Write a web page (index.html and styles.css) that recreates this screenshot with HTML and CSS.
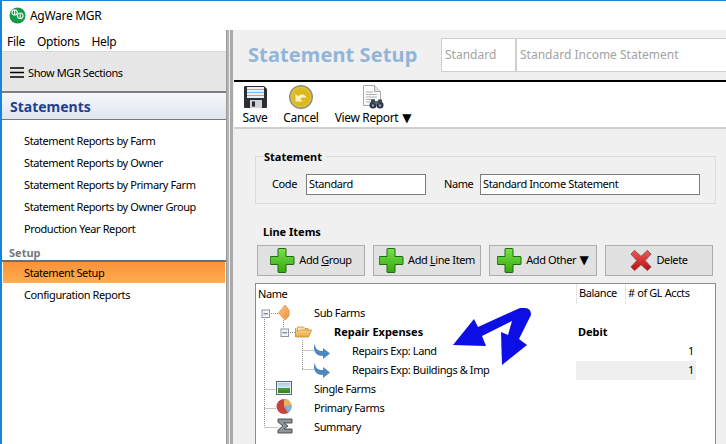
FILE: index.html
```html
<!DOCTYPE html>
<html lang="en">
<head>
<meta charset="utf-8">
<title>AgWare MGR</title>
<link rel="stylesheet" href="styles.css">
</head>
<body>
<div class="window">
  <header class="titlebar">
    <svg class="logo" width="17" height="17" viewBox="0 0 17 17"><circle cx="8.5" cy="8.5" r="8" fill="#109a45"/><g fill="none" stroke="#e8f5ec" stroke-width="1.2"><circle cx="5.6" cy="5.4" r="2.6"/><circle cx="11.2" cy="8.8" r="2.8"/><path d="M5.6 3v5M11.2 6.2v5.2"/></g></svg>
    <span class="apptitle">AgWare MGR</span>
  </header>
  <div class="workspace">
    <aside class="sidebar">
      <nav class="menu"><span>File</span><span>Options</span><span>Help</span></nav>
      <div class="sections-toggle">
        <svg width="14" height="11" viewBox="0 0 14 11"><path d="M0 1h14M0 5.5h14M0 10h14" stroke="#000" stroke-width="1.6"/></svg>
        <span>Show MGR Sections</span>
      </div>
      <h2 class="section-title">Statements</h2>
      <ul class="navlist">
        <li>Statement Reports by Farm</li>
        <li>Statement Reports by Owner</li>
        <li>Statement Reports by Primary Farm</li>
        <li>Statement Reports by Owner Group</li>
        <li>Production Year Report</li>
      </ul>
      <h3 class="navgroup">Setup</h3>
      <ul class="navlist navlist-setup">
        <li class="selected">Statement Setup</li>
        <li>Configuration Reports</li>
      </ul>
    </aside>
    <div class="splitter"></div>
    <main class="main">
      <div class="pagehead">
        <h1>Statement Setup</h1>
        <div class="headbox code">Standard</div>
        <div class="headbox name">Standard Income Statement</div>
      </div>
      <div class="toolbar">
        <div class="tool tool-save">
          <svg width="23" height="22" viewBox="0 0 23 22"><path d="M1 0h19l3 3v18a1 1 0 0 1-1 1H1a1 1 0 0 1-1-1V1a1 1 0 0 1 1-1z" fill="#2b2e33"/><rect x="3" y="1" width="17" height="11" fill="#e6f0fa"/><path d="M3 3.5h17M3 6.5h17M3 9.500h17" stroke="#7fb2e6" stroke-width="1"/><rect x="6" y="14" width="12" height="8" fill="#d0d3d6"/><rect x="8" y="15.500" width="3" height="5" fill="#26282c"/></svg>
          <span>Save</span>
        </div>
        <div class="tool tool-cancel">
          <svg width="24" height="24" viewBox="0 0 24 24"><circle cx="12" cy="12" r="11.300" fill="#e3c22c" stroke="#8a8f90" stroke-width="1.400"/><circle cx="12" cy="12" r="8.800" fill="#dcb821"/><path d="M6.500 9v7.500h7.500l-2.700-2.600c1.700-1.500 3.700-1.700 6.200-.9-.6-3.600-5.300-5-8.300-1.800z" fill="#fdf3c0"/></svg>
          <span>Cancel</span>
        </div>
        <div class="tool tool-report">
          <svg width="22" height="24" viewBox="0 0 22 24"><path d="M1.500.5h11l6 6v14h-17z" fill="#fafafa" stroke="#a8a8a8"/><path d="M12.500.5v6h6" fill="#e2e2e2" stroke="#a8a8a8"/><path d="M4 7h7M4 9.500h11M4 12h11M4 14.500h9M4 17h6" stroke="#b0b0b0"/><circle cx="11" cy="20" r="3.500" fill="#2d3640"/><circle cx="18" cy="20" r="3.500" fill="#2d3640"/><rect x="9" y="14.500" width="4" height="4" fill="#3a4450"/><rect x="16" y="14.500" width="4" height="4" fill="#3a4450"/><rect x="12.500" y="16" width="4" height="3" fill="#55616e"/><circle cx="11" cy="20.500" r="1.300" fill="#7fa0c0"/><circle cx="18" cy="20.500" r="1.300" fill="#7fa0c0"/></svg>
          <span>View Report <i class="caret">▼</i></span>
        </div>
      </div>
      <div class="content">
        <fieldset class="statement">
          <legend>Statement</legend>
          <div class="fields">
            <label class="lbl-code">Code</label><div class="input input-code">Standard</div>
            <label class="lbl-name">Name</label><div class="input input-name">Standard Income Statement</div>
          </div>
        </fieldset>
        <h4 class="lineitems">Line Items</h4>
        <div class="buttons">
          <div class="btn"><svg class="plus" width="25" height="25" viewBox="0 0 25 25"><use href="#plusicon"/></svg><span>Add <u>G</u>roup</span></div>
          <div class="btn"><svg class="plus" width="25" height="25" viewBox="0 0 25 25"><use href="#plusicon"/></svg><span>Add <u>L</u>ine Item</span></div>
          <div class="btn"><svg class="plus" width="25" height="25" viewBox="0 0 25 25"><use href="#plusicon"/></svg><span>Add Other <i class="caret">▼</i></span></div>
          <div class="btn"><svg width="22" height="23" viewBox="0 0 24 24"><defs><linearGradient id="xg" x1="0" y1="0" x2="0" y2="1"><stop offset="0" stop-color="#f05a5a"/><stop offset="1" stop-color="#b80d0d"/></linearGradient></defs><path d="M5 1l7 6.500L19 1l4 4-6.500 7 6.500 7-4 4-7-6.500L5 23l-4-4 6.500-7L1 5z" fill="url(#xg)" stroke="#8a4a4a"/></svg><span>Delete</span></div>
        </div>
        <div class="tree">
          <div class="treehead"><div class="col-name">Name</div><div class="col-bal">Balance</div><div class="col-gl"># of GL Accts</div></div>
          <div class="row l0"><div class="col-name">Sub Farms</div></div>
          <div class="row l1"><div class="col-name">Repair Expenses</div><div class="col-bal">Debit</div></div>
          <div class="row l2"><div class="col-name">Repairs Exp: Land</div><div class="col-bal"></div><div class="col-gl">1</div></div>
          <div class="row l2 alt"><div class="col-name">Repairs Exp: Buildings &amp; Imp</div><div class="col-bal"></div><div class="col-gl">1</div></div>
          <div class="row l0"><div class="col-name">Single Farms</div></div>
          <div class="row l0"><div class="col-name">Primary Farms</div></div>
          <div class="row l0"><div class="col-name">Summary</div></div>
          <svg class="treeart" width="120" height="160" viewBox="255 284 120 160">
            <defs>
              <linearGradient id="dia" x1="0" y1="0" x2="1" y2="1"><stop offset="0" stop-color="#fbc78f"/><stop offset="1" stop-color="#ee8f38"/></linearGradient>
              <linearGradient id="fold" x1="0" y1="0" x2="0" y2="1"><stop offset="0" stop-color="#fde3a8"/><stop offset="1" stop-color="#eda63f"/></linearGradient>
              <linearGradient id="land" x1="0" y1="0" x2="0" y2="1"><stop offset="0" stop-color="#a5cde8"/><stop offset=".45" stop-color="#d2e6ee"/><stop offset=".5" stop-color="#4ea23a"/><stop offset="1" stop-color="#2f7f2c"/></linearGradient>
              <path id="retarrow" d="M1 1.500c.5 5 3.500 6.500 8 6.500V5l7 5.500-7 5.500v-3c-6 0-9-3.500-9-8 0-2 .5-3.500 1-4z" fill="#4d87bf"/>
            </defs>
            <g fill="none" stroke="#8c8c8c" stroke-dasharray="1 1">
              <path d="M264.500 317v110M264.500 389.500h12M264.500 408.500h12M264.500 427.500h13"/>
              <path d="M269 313.500h9M283.500 320v8M288 332.500h7"/>
              <path d="M302.500 340v30M302.500 350.500h12M302.500 369.500h12"/>
            </g>
            <g fill="#f2f4f8" stroke="#8d96a3"><rect x="262" y="310" width="7.500" height="7.500"/><rect x="281" y="329" width="7.500" height="7.500"/></g>
            <path d="M263.500 313.800h4.500M282.500 332.800h4.500" stroke="#51617a"/>
            <path d="M285 305l4 5v6l-4 4-6.500-7z" fill="url(#dia)" stroke="#dc9756" stroke-width=".8"/>
            <path d="M295.500 328v9h13l3-7h-12l-2 1.500v-4.500h6l1.500 1.500h3v2" fill="url(#fold)" stroke="#c58a32" stroke-width=".8"/>
            <use href="#retarrow" x="314" y="343"/>
            <use href="#retarrow" x="314" y="362"/>
            <rect x="276.500" y="381.500" width="15" height="13" fill="#e8ecef" stroke="#5d6770"/>
            <rect x="278" y="383" width="12" height="10" fill="url(#land)"/>
            <circle cx="284" cy="406.500" r="7.500" fill="#c8433c"/>
            <path d="M284 406.500V399a7.500 7.500 0 0 1 7.400 6.500z" fill="#e6b264"/>
            <path d="M284 406.500l7.400-1a7.500 7.500 0 0 1-3.400 7.300z" fill="#7fb4de"/>
            <path d="M278 419h14v4h-8l4 3-4 3h8v4h-14v-3l5-4-5-4z" fill="#8f959b" stroke="#3f4347" stroke-width=".9"/>
          </svg>
        </div>
      </div>
      <svg class="callout" width="90" height="70" viewBox="448 302 90 70">
        <defs><filter id="soft" x="-10%" y="-10%" width="120%" height="120%"><feGaussianBlur stdDeviation=".5"/></filter></defs>
        <path filter="url(#soft)" fill="#0a0ae6" d="M453 345L486 346 482 336 512 321 508 335 501 332 502 365 527 345 519 339 531 315Q531 308 525 308L520 308 478 327 474 319z"/>
      </svg>
    </main>
  </div>
</div>
<svg class="defs" width="0" height="0">
  <defs>
    <linearGradient id="pg" x1="0" y1="0" x2="0" y2="1"><stop offset="0" stop-color="#78e24a"/><stop offset="1" stop-color="#35a80f"/></linearGradient>
    <path id="plusicon" d="M8.500 .5h7a.5.5 0 0 1 .5.500V8.500h7.500a.5.5 0 0 1 .5.500v7a.5.5 0 0 1-.5.500H16V24a.5.5 0 0 1-.5.500h-7A.5.5 0 0 1 8 24v-7.500H.8a.5.5 0 0 1-.5-.500V9a.5.5 0 0 1 .5-.500H8V1a.5.5 0 0 1 .5-.500z" fill="url(#pg)" stroke="#1f6a12"/>
  </defs>
</svg>
</body>
</html>
```
FILE: styles.css
```css
* { box-sizing: border-box; }
html, body { margin: 0; padding: 0; }
body {
  width: 726px; height: 444px; overflow: hidden; background: #fff; color: #000;
  font: 11px/1 "Noto Sans", "Liberation Sans", sans-serif;
  letter-spacing: -0.4px;
}
.window { height: 444px; display: flex; flex-direction: column; border-top: 1px solid #1883d7; border-left: 2px solid #1883d7; }
.defs { position: absolute; }

.titlebar { height: 29px; display: flex; align-items: center; padding: 0 0 0 7px; gap: 4px; background: #fff; }
.logo { flex: none; }
.apptitle { font-size: 12px; letter-spacing: -0.3px; }

.workspace { flex: 1; display: flex; min-height: 0; }
.sidebar { width: 224px; flex: none; background: #fff; display: flex; flex-direction: column; }
.menu { height: 22px; display: flex; align-items: center; gap: 12px; padding: 2px 0 0 5px; font-size: 12px; letter-spacing: -0.3px; border-bottom: 1px solid #d9d9d9; }
.sections-toggle { height: 41px; display: flex; align-items: center; gap: 4px; padding: 2px 0 0 8px; background: #e6e6e6; border-bottom: 2px solid #7f7f7f; }
.section-title { margin: 0; height: 27px; display: flex; align-items: center; padding: 2px 0 0 8px; font-size: 14px; letter-spacing: 0; font-weight: 700; color: #1f3f8f; background: linear-gradient(#f6f8fb, #dfe5ee); border-bottom: 1px solid #777; }
.navlist { list-style: none; margin: 0; padding: 10px 0 0; }
.navlist li { height: 22px; line-height: 22px; padding-left: 22px; }
.navgroup { margin: 0; height: 16px; padding: 7px 0 0 7px; font-size: 11px; letter-spacing: 0; line-height: 11px; font-weight: 700; color: #777; }
.navlist-setup { padding: 0; border-top: 2px solid #6e6e6e; margin-top: 4px; }
.navlist-setup li.selected { margin: 0 1px; padding-left: 21px; height: 21px; line-height: 21px; background: linear-gradient(#f9923a, #ffab4c); border-bottom: 1px solid #fdb063; }
.navlist-setup li:last-child { margin-top: 1px; }

.splitter { width: 8px; flex: none; background: linear-gradient(90deg, #9a9a9a 0 1px, #b4b4b4 1px 3px, #f0f0f0 3px 4px, #a9a9a9 4px 7px, #f0f0f0 7px); }

.main { flex: 1; position: relative; background: #f0f0f0; display: flex; flex-direction: column; min-width: 0; }
.pagehead { height: 52px; display: flex; align-items: flex-start; padding: 8px 0 0 14px; border-bottom: 2px solid #000; flex: none; }
.pagehead h1 { margin: 0; width: 193px; font-size: 20px; letter-spacing: 0.1px; line-height: 34px; font-weight: 700; color: #93b5d9; }
.headbox { height: 34px; background: #fff; border: 1px solid #cfcfcf; color: #a3a3a3; font-size: 12px; letter-spacing: 0; line-height: 32px; padding-left: 3px; }
.headbox.code { width: 75px; }
.headbox.name { width: 210px; border-right: 0; }

.toolbar { height: 47px; flex: none; display: flex; background: #fff; border-bottom: 2px solid #cfcfcf; padding: 3px 0 0 9px; }
.tool { display: flex; flex-direction: column; align-items: center; gap: 3px; font-size: 12px; letter-spacing: -0.35px; }
.tool span { white-space: nowrap; }
.tool svg { display: block; }
.tool-save svg { margin: 1px 0; }
.tool-save { width: 24px; }
.tool-cancel { width: 36px; margin-left: 16px; }
.tool-report { width: 76px; margin-left: 16px; }
.caret { font-style: normal; font-family: "DejaVu Sans", sans-serif; font-size: 12px; letter-spacing: 0; margin-left: 1px; }

.content { flex: 1; padding: 0 10px 0 21px; min-height: 0; }
.statement { margin: 22px 0 0; width: 461px; height: 53px; padding: 0; border: 1px solid #dcdcdc; }
.statement legend { margin-left: 8px; padding: 0 4px 0 0; font-weight: 700; font-size: 11px; letter-spacing: 0; line-height: 11px; }
.fields { display: flex; align-items: center; height: 21px; margin-top: 12px; padding-bottom: 0; }
.lbl-code { margin: 0 0 2px 16px; width: 34px; }
.lbl-name { margin: 0 0 2px 18px; width: 36px; }
.input { height: 21px; background: #fff; border: 1px solid #7c7c7c; line-height: 17px; padding-left: 2px; }
.input-code { width: 120px; }
.input-name { width: 220px; }
.lineitems { margin: 22px 0 0 8px; height: 12px; font-size: 11px; letter-spacing: 0; line-height: 12px; font-weight: 700; }
.buttons { display: flex; gap: 8px; margin: 7px 0 0 2px; }
.btn { width: 108px; height: 31px; flex: none; display: flex; align-items: center; justify-content: center; gap: 4px; background: #e1e1e1; border: 1px solid #adadad; white-space: nowrap; }
.btn svg { flex: none; }
.btn span { margin-bottom: 2px; }
.tree { position: relative; margin-top: 7px; width: 461px; height: 170px; background: #fff; border: 1px solid #8d8d8d; border-bottom: 0; }
.treehead { height: 20px; display: flex; align-items: center; padding-bottom: 2px; }
.row { height: 19px; display: flex; align-items: center; padding-bottom: 2px; }
.col-name { width: 320px; flex: none; padding-left: 2px; white-space: nowrap; }
.col-bal { width: 49px; flex: none; padding-left: 2px; }
.col-gl { width: 71px; flex: none; padding-left: 2px; white-space: nowrap; }
.treehead .col-bal, .treehead .col-gl { align-self: stretch; margin-bottom: -2px; line-height: 18px; border-left: 1px solid #e4e4e4; }
.row .col-gl { text-align: right; padding-right: 2px; }
.l0 .col-name { padding-left: 58px; }
.l1 .col-name { padding-left: 78px; font-weight: 700; letter-spacing: 0; }
.l2 .col-name { padding-left: 96px; }
.l1 .col-bal { font-weight: 700; letter-spacing: 0; }
.alt .col-bal, .alt .col-gl { background: #efefef; align-self: stretch; margin-bottom: -2px; line-height: 17px; }
.treeart { position: absolute; left: -1px; top: 0; pointer-events: none; }
.callout { position: absolute; left: 214px; top: 272px; pointer-events: none; }
```
